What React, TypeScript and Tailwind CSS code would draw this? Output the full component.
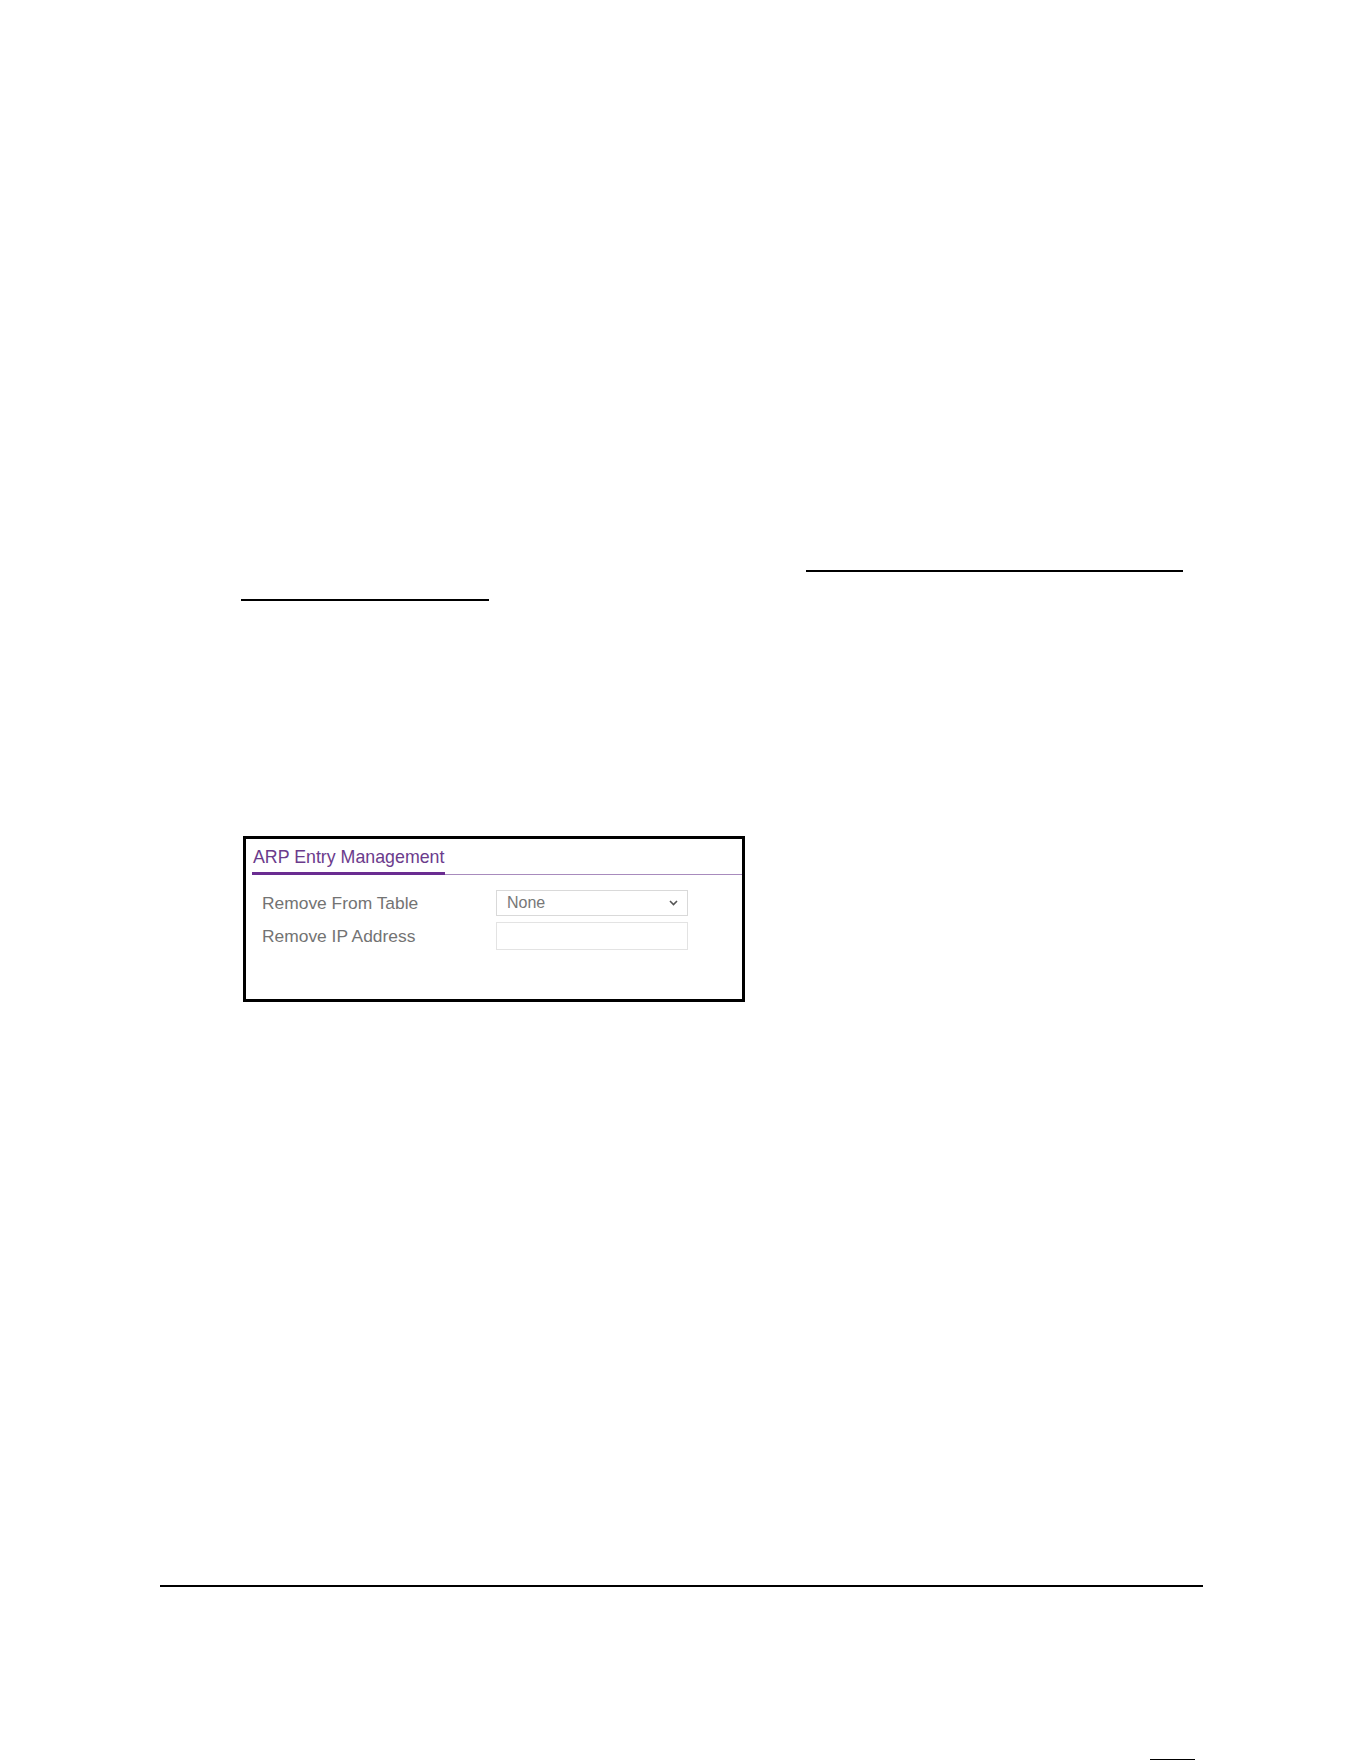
export default function App() {
  return (
    <div className="w-[1361px] h-[1761px] bg-white flex flex-col font-['Liberation_Sans',Arial,sans-serif] overflow-hidden">
      {/* link underlines from the text above */}
      <div className="pt-[570px]">
        <div className="ml-[806px] w-[377px] h-[2px] bg-black" />
      </div>
      <div className="mt-[27px] ml-[241px] w-[248px] h-[2px] bg-black" />

      {/* ARP Entry Management panel */}
      <div className="mt-[235px] ml-[243px] w-[502px] h-[166px] border-[3px] border-black flex flex-col">
        <div className="mt-[8px] ml-[6px] flex items-end">
          <div className="px-px pb-[5px] border-b-[3px] border-[#6a2c91] text-[17.8px] leading-[20px] text-[#6b3b8c]">
            ARP Entry Management
          </div>
          <div className="flex-1 border-b border-[#a88bbd]" />
        </div>

        <div className="mt-[15px] flex flex-col gap-[6px] pl-[16px]">
          <div className="flex items-center h-[26px]">
            <span className="w-[234px] text-[17.4px] leading-[20px] text-[#737373]">Remove From Table</span>
            <div className="w-[192px] h-[26px] border border-[#d9d9d9] flex items-center justify-between pl-[10px] pr-[9px]">
              <span className="text-[16px] text-[#777777]">None</span>
              <svg width="9" height="6" viewBox="0 0 9 6" fill="none">
                <path d="M1 1l3.5 3.5L8 1" stroke="#555" strokeWidth="1.6" />
              </svg>
            </div>
          </div>
          <div className="flex items-center h-[28px]">
            <span className="w-[234px] text-[17.4px] leading-[20px] text-[#737373]">Remove IP Address</span>
            <div className="w-[192px] h-[28px] border border-[#e3e3e3]" />
          </div>
        </div>
      </div>

      {/* page footer rule */}
      <div className="mt-[583px] ml-[160px] w-[1043px] h-[2px] bg-black" />
      <div className="mt-[172px] ml-[1150px] w-[45px] h-px bg-black" />
    </div>
  );
}
